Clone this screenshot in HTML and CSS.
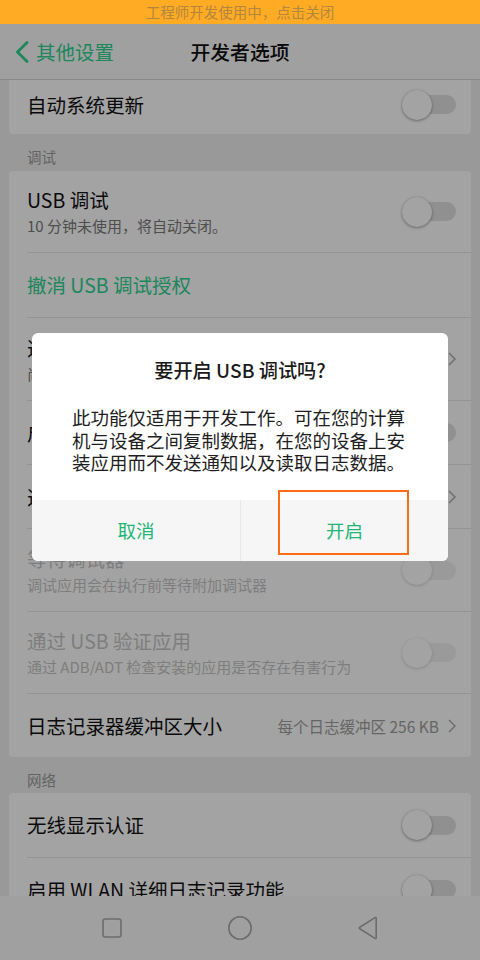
FILE: index.html
```html
<!DOCTYPE html>
<html lang="zh-CN">
<head>
<meta charset="utf-8">
<title>开发者选项</title>
<link rel="stylesheet" href="styles.css">
</head>
<body>
<div class="screen">
  <div class="statusbar">工程师开发使用中，点击关闭</div>
  <header class="header">
    <div class="back">
      <svg class="back-icon" width="14" height="22" viewBox="0 0 14 22"><polyline points="12,1.5 2.5,11 12,20.5" fill="none" stroke="currentColor" stroke-width="2.8" stroke-linecap="round" stroke-linejoin="round"/></svg>
      <span>其他设置</span>
    </div>
    <div class="title">开发者选项</div>
  </header>

  <main class="content">
    <section class="card card-first">
      <div class="row row-first">
        <div class="text"><div class="t">自动系统更新</div></div>
        <div class="switch"><div class="knob"></div></div>
      </div>
    </section>

    <div class="section-label">调试</div>
    <section class="card">
      <div class="row h81">
        <div class="text"><div class="t">USB 调试</div><div class="s">10 分钟未使用，将自动关闭。</div></div>
        <div class="switch"><div class="knob"></div></div>
      </div>
      <div class="row h65">
        <div class="text"><div class="t green">撤消 USB 调试授权</div></div>
      </div>
      <div class="row h83">
        <div class="text"><div class="t">选择模拟位置信息应用</div><div class="s">尚未设置模拟位置信息应用</div></div>
        <svg class="chev" width="8" height="14" viewBox="0 0 8 14"><polyline points="1,1 7,7 1,13" fill="none" stroke="currentColor" stroke-width="1.4"/></svg>
      </div>
      <div class="row h64">
        <div class="text"><div class="t">启用视图属性检查功能</div></div>
        <div class="switch"><div class="knob"></div></div>
      </div>
      <div class="row h64">
        <div class="text"><div class="t">选择调试应用</div></div>
        <svg class="chev" width="8" height="14" viewBox="0 0 8 14"><polyline points="1,1 7,7 1,13" fill="none" stroke="currentColor" stroke-width="1.4"/></svg>
      </div>
      <div class="row h83 disabled">
        <div class="text"><div class="t">等待调试器</div><div class="s">调试应用会在执行前等待附加调试器</div></div>
        <div class="switch"><div class="knob"></div></div>
      </div>
      <div class="row h82 disabled">
        <div class="text"><div class="t">通过 USB 验证应用</div><div class="s">通过 ADB/ADT 检查安装的应用是否存在有害行为</div></div>
        <div class="switch"><div class="knob"></div></div>
      </div>
      <div class="row h64">
        <div class="text"><div class="t">日志记录器缓冲区大小</div></div>
        <div class="value">每个日志缓冲区 256 KB
          <svg class="chev" width="8" height="14" viewBox="0 0 8 14"><polyline points="1,1 7,7 1,13" fill="none" stroke="currentColor" stroke-width="1.4"/></svg>
        </div>
      </div>
    </section>

    <div class="section-label sl2">网络</div>
    <section class="card">
      <div class="row h64">
        <div class="text"><div class="t">无线显示认证</div></div>
        <div class="switch"><div class="knob"></div></div>
      </div>
      <div class="row h64">
        <div class="text"><div class="t">启用 WLAN 详细日志记录功能</div></div>
        <div class="switch"><div class="knob"></div></div>
      </div>
    </section>
  </main>

  <nav class="navbar">
    <svg width="20" height="20" viewBox="0 0 20 20"><rect x="1" y="1" width="18" height="18" rx="2.5" fill="none" stroke="currentColor" stroke-width="1.6"/></svg>
    <svg width="24" height="24" viewBox="0 0 24 24"><circle cx="12" cy="12" r="11.2" fill="none" stroke="currentColor" stroke-width="1.6"/></svg>
    <svg width="20" height="24" viewBox="0 0 20 24"><path d="M18.2 2.2 L18.2 21.8 Q18.2 23 17 22.4 L1.8 12.8 Q0.8 12 1.8 11.2 L17 1.6 Q18.2 1 18.2 2.2 Z" fill="none" stroke="currentColor" stroke-width="1.6" stroke-linejoin="round"/></svg>
  </nav>

  <div class="overlay"></div>

  <div class="dialog">
    <div class="dlg-title">要开启 USB 调试吗?</div>
    <div class="dlg-body">此功能仅适用于开发工作。可在您的计算机与设备之间复制数据，在您的设备上安装应用而不发送通知以及读取日志数据。</div>
    <div class="dlg-buttons">
      <div class="btn">取消</div>
      <div class="btn">开启</div>
    </div>
  </div>
  <div class="highlight"></div>
</div>
</body>
</html>
```
FILE: styles.css
```css
* { box-sizing: border-box; margin: 0; padding: 0; }
html, body { width: 480px; height: 960px; overflow: hidden; }
body {
  font-family: "Noto Sans CJK SC", "Noto Sans", sans-serif;
  color: #111;
  background: #efefef;
}
.screen {
  position: relative;
  width: 480px;
  height: 960px;
  display: flex;
  flex-direction: column;
  overflow: hidden;
}
.statusbar {
  position: relative;
  z-index: 5;
  height: 24px;
  flex: none;
  background: #ffab24;
  color: #b2873f;
  font-size: 14.5px;
  line-height: 24px;
  text-align: center;
}
.header {
  height: 56px;
  flex: none;
  background: #fafafa;
  border-bottom: 1px solid #d6d6d6;
  display: grid;
  grid-template-columns: 1fr auto 1fr;
  align-items: center;
  position: relative;
  z-index: 1;
}
.back {
  display: flex;
  align-items: center;
  padding-left: 15px;
  color: #2ed392;
  font-size: 19.5px;
  line-height: 26px;
}
.back-icon { margin-right: 7px; margin-top: 1px; }
.title {
  font-size: 19.8px;
  font-weight: 500;
  line-height: 26px;
  color: #111;
}
.content {
  flex: 1;
  overflow: hidden;
}
.card {
  background: #fff;
  margin: 0 9px;
  border-radius: 4px;
}
.card-first { border-radius: 0 0 4px 4px; }
.row {
  display: flex;
  align-items: center;
  justify-content: space-between;
  margin-left: 18px;
  padding-right: 15px;
  border-top: 1px solid #e6e6e6;
}
.row:first-child { border-top: none; }
.row-first { height: 54px; padding-bottom: 5px; }
.h64 { min-height: 64px; }
.h65 { min-height: 65px; }
.h81 { min-height: 81px; }
.h82 { min-height: 82px; }
.h83 { min-height: 83px; }
.text { display: flex; flex-direction: column; gap: 3px; }
.t { font-size: 19.5px; line-height: 26px; color: #111; white-space: nowrap; }
.s { font-size: 15px; line-height: 20px; color: #7a7a7a; white-space: nowrap; }
.green { color: #2ed392; }
.disabled .t, .disabled .s { color: #c6c6c6; }
.disabled .switch { opacity: 0.45; }
.section-label {
  font-size: 14.5px;
  line-height: 20px;
  color: #9c9c9c;
  padding: 13px 0 4px 27px;
}
.sl2 { padding-bottom: 3px; }
.switch {
  width: 53px;
  height: 19px;
  border-radius: 10px;
  background: #e2e2e2;
  display: flex;
  align-items: center;
  flex: none;
}
.knob {
  width: 30px;
  height: 30px;
  flex: none;
  border-radius: 50%;
  background: #fff;
  box-shadow: 0 1px 3px rgba(0,0,0,0.35), 0 0 1px rgba(0,0,0,0.2);
  margin-left: -1px;
}
.chev { color: #a8a8a8; flex: none; }
.value {
  display: flex;
  align-items: center;
  gap: 9px;
  font-size: 15.5px;
  color: #9e9e9e;
  white-space: nowrap;
}
.navbar {
  height: 64px;
  flex: none;
  background: #fbfbfb;
  display: flex;
  justify-content: center;
  align-items: center;
  gap: 106px;
  color: #a9a9a9;
  position: relative;
}
.overlay {
  position: absolute;
  left: 0; top: 24px; right: 0; bottom: 0;
  background: rgba(0,0,0,0.36);
  z-index: 2;
}
.dialog {
  position: absolute;
  left: 32px;
  top: 333px;
  width: 416px;
  height: 228px;
  background: #fff;
  border-radius: 6px;
  z-index: 3;
  display: flex;
  flex-direction: column;
  overflow: hidden;
}
.dlg-title {
  padding-top: 24px;
  font-size: 19.2px;
  line-height: 26px;
  font-weight: 500;
  text-align: center;
  color: #1a1a1a;
}
.dlg-body {
  margin-top: 23px;
  padding: 0 40px;
  font-size: 18.5px;
  line-height: 22.5px;
  color: #1e1e1e;
}
.dlg-buttons {
  margin-top: auto;
  height: 61px;
  display: grid;
  grid-template-columns: 1fr 1fr;
  background: #f6f6f6;
}
.btn {
  display: flex;
  align-items: center;
  justify-content: center;
  font-size: 18.5px;
  color: #22b676;
  padding-bottom: 2px;
}
.btn + .btn { border-left: 1px solid #e8e8e8; }
.highlight {
  position: absolute;
  left: 278px;
  top: 490px;
  width: 131px;
  height: 65px;
  border: 2px solid #ff6c16;
  z-index: 4;
}
```
